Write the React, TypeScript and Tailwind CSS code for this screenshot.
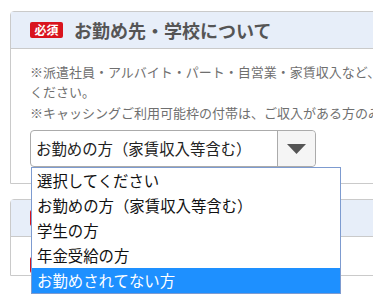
import { useState } from 'react';

const options = [
    '選択してください',
    'お勤めの方（家賃収入等含む）',
    '学生の方',
    '年金受給の方',
    'お勤めされてない方',
];

function Badge() {
    return (
        <span className="flex h-[16px] w-[33px] shrink-0 items-center justify-center rounded-[2px] bg-[#d9141e] text-[12px] font-bold leading-none text-white">
            必須
        </span>
    );
}

export default function App() {
    const [selected] = useState(1);
    const [hover] = useState(4);

    return (
        <div className="h-[300px] w-full overflow-hidden bg-white pl-[10px] pt-[11px] font-['Noto_Sans_CJK_JP','Noto_Sans',sans-serif]">
            {/* お勤め先・学校 */}
            <section className="w-[560px] rounded-t-[4px] border border-[#cacaca]">
                <header className="flex h-[37px] items-center gap-[11px] border-b border-[#cacaca] bg-[#e7eef9] pl-[19px]">
                    <Badge />
                    <h2 className="text-[18px] font-bold leading-none text-[#555]">お勤め先・学校について</h2>
                </header>
                <div className="pb-[16px] pl-[19px] pt-[13px]">
                    <p className="text-[13px] leading-[20px] text-[#6f6f6f]">
                        <span className="block whitespace-nowrap">
                            ※派遣社員・アルバイト・パート・自営業・家賃収入など、ご収入がある方は「お勤めの方」を選択して
                        </span>
                        <span className="block">ください。</span>
                    </p>
                    <p className="mt-[1px] whitespace-nowrap text-[13px] leading-[20px] text-[#6f6f6f]">
                        ※キャッシングご利用可能枠の付帯は、ご収入がある方のみとなります。
                    </p>

                    {/* セレクト */}
                    <div className="relative mt-[7px] w-[286px]">
                        <div className="flex h-[37px] items-stretch rounded-[4px] border border-[#ababab] bg-white">
                            <span className="flex flex-1 items-center pl-[5px] text-[15.4px] leading-none text-[#222]">
                                {options[selected]}
                            </span>
                            <span className="flex w-[38px] items-center justify-center rounded-r-[4px] border-l border-[#ababab] bg-[#f5f5f5]">
                                <svg width="19" height="10" viewBox="0 0 19 10">
                                    <polygon points="0,0 19,0 9.5,10" fill="#555" />
                                </svg>
                            </span>
                        </div>

                        {/* ドロップダウン */}
                        <ul className="absolute left-[1px] top-full z-10 w-[310px] border border-[#7d9bd0] bg-white">
                            {options.map((o, i) => (
                                <li
                                    key={o}
                                    className={
                                        i === hover
                                            ? 'flex h-[25px] items-center bg-[#1e90ff] pl-[5px] text-[15.4px] leading-none text-white'
                                            : 'flex h-[25px] items-center pl-[5px] text-[15.4px] leading-none text-[#111]'
                                    }
                                >
                                    {o}
                                </li>
                            ))}
                        </ul>
                    </div>
                </div>
            </section>

            {/* 次のセクション */}
            <section className="mt-[15px] w-[560px] rounded-t-[4px] border border-[#cacaca]">
                <header className="flex h-[37px] items-center gap-[11px] border-b border-[#cacaca] bg-[#e7eef9] pl-[19px]">
                    <Badge />
                    <h2 className="text-[18px] font-bold leading-none text-[#555]">お勤め先名</h2>
                </header>
                <div className="pl-[19px] pt-[17px]">
                    <div className="flex items-center gap-[8px]">
                        <Badge />
                        <span className="text-[14px] text-[#333]">勤務先名</span>
                    </div>
                </div>
            </section>
        </div>
    );
}
